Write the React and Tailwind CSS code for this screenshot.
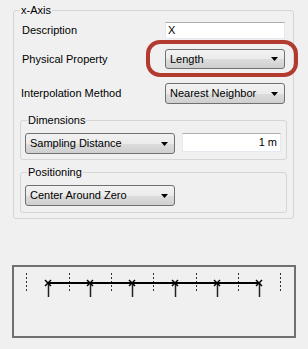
import React from "react";

const font = { fontFamily: '"Liberation Sans", Arial, sans-serif' };

function Combo({ text, className = "" }) {
  return (
    <div
      className={
        "relative flex items-center rounded-[3px] border border-[#707070] bg-[linear-gradient(to_bottom,#f2f2f2_0%,#ebebeb_50%,#dddddd_51%,#cfcfcf_100%)] pl-[4px] text-[11px] text-black " +
        className
      }
    >
      <span className="leading-none">{text}</span>
      <svg
        className="absolute right-[6px] top-1/2 -translate-y-1/2"
        width="7"
        height="4"
        viewBox="0 0 7 4"
      >
        <polygon points="0,0 7,0 3.5,4" fill="#000" />
      </svg>
    </div>
  );
}

function TextBox({ text, className = "", right = false }) {
  return (
    <div
      className={
        "flex items-center border border-[#e3e9ef] border-t-[#abadb3] bg-white text-[11px] text-black " +
        (right ? "justify-end pr-[3px] " : "pl-[2px] ") +
        className
      }
    >
      <span className="leading-none">{text}</span>
    </div>
  );
}

function Group({ title, className = "", titleClass = "", children }) {
  return (
    <div className={"relative rounded-[3px] border border-[#d5d5d5] " + className}>
      <span
        className={
          "absolute top-[-8px] bg-[#f0f0f0] px-[1px] text-[11px] leading-[14px] text-black " +
          titleClass
        }
      >
        {title}
      </span>
      {children}
    </div>
  );
}

export default function App() {
  const crosses = [48, 90, 132, 175, 217, 259];
  const dashes = [26, 69, 111, 153, 196, 238, 280];
  return (
    <div className="relative h-[349px] w-[308px] overflow-hidden bg-[#f0f0f0]" style={font}>
      <div className="pt-[10px] pl-[13px]">
        <Group title="x-Axis" className="h-[209px] w-[281px]" titleClass="left-[6px]">
          <div className="flex flex-col pt-[11px]">
            <div className="flex h-[17px] items-center">
              <span className="w-[151px] pl-[8px] text-[11px]">Description</span>
              <TextBox text="X" className="h-[17px] w-[120px]" />
            </div>
            <div className="mt-[10px] flex h-[20px] items-center">
              <span className="w-[151px] pl-[8px] text-[11px]">Physical Property</span>
              <Combo text="Length" className="h-[20px] w-[120px]" />
            </div>
            <div className="mt-[14px] flex h-[21px] items-center">
              <span className="w-[151px] pl-[7px] text-[11px]">Interpolation Method</span>
              <Combo text="Nearest Neighbor" className="h-[21px] w-[120px]" />
            </div>
            <div className="mt-[16px] pl-[6px]">
              <Group title="Dimensions" className="h-[40px] w-[267px]" titleClass="left-[6px]">
                <div className="flex items-start pl-[4px] pt-[12px]">
                  <Combo text="Sampling Distance" className="h-[21px] w-[150px]" />
                  <TextBox text="1 m" right className="ml-[7px] h-[19px] w-[99px]" />
                </div>
              </Group>
            </div>
            <div className="mt-[12px] pl-[6px]">
              <Group title="Positioning" className="h-[41px] w-[267px]" titleClass="left-[6px]">
                <div className="flex items-start pl-[4px] pt-[12px]">
                  <Combo text="Center Around Zero" className="h-[21px] w-[150px]" />
                </div>
              </Group>
            </div>
          </div>
        </Group>
      </div>

      <div className="ml-[12px] mt-[46px] h-[73px] w-[284px] border-2 border-[#707070]">
        <svg width="280" height="69" viewBox="14 276 280 69">
          {dashes.map((x) => (
            <line
              key={"d" + x}
              x1={x + 0.5}
              y1="282"
              x2={x + 0.5}
              y2="300"
              stroke="#333"
              strokeWidth="1"
              strokeDasharray="2 2"
            />
          ))}
          <line x1="48" y1="292" x2="260" y2="292" stroke="#000" strokeWidth="2" />
          {crosses.map((x) => (
            <g key={"c" + x}>
              <line x1={x + 0.5} y1="292" x2={x + 0.5} y2="306" stroke="#222" strokeWidth="1.5" />
              <line x1={x - 3} y1="289" x2={x + 3} y2="295" stroke="#000" strokeWidth="1.5" />
              <line x1={x - 3} y1="295" x2={x + 3} y2="289" stroke="#000" strokeWidth="1.5" />
            </g>
          ))}
        </svg>
      </div>

      <div className="pointer-events-none absolute left-[146px] top-[40px] h-[37px] w-[152px] rounded-[14px] border-[4px] border-[#b23a2f]" />
    </div>
  );
}
